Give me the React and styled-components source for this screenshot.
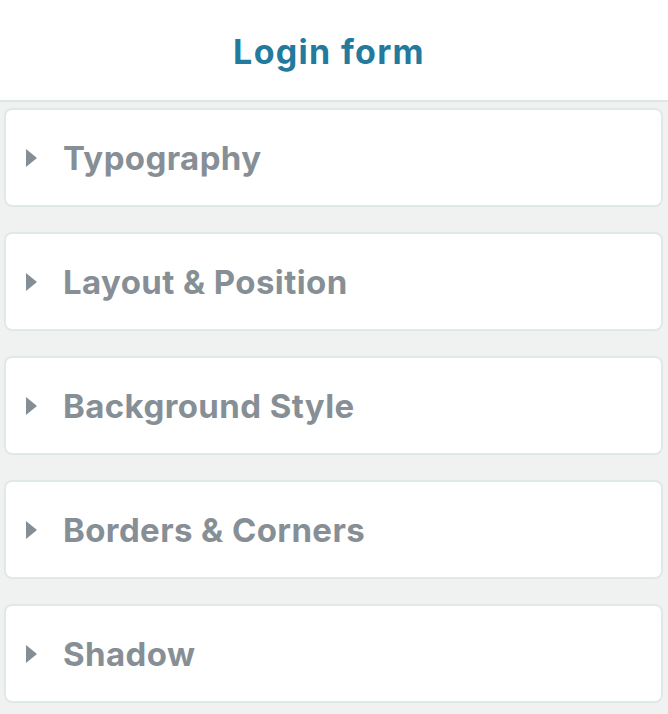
import React from 'react';
import styled, { createGlobalStyle } from 'styled-components';

const GlobalStyle = createGlobalStyle`
  html, body {
    margin: 0;
    padding: 0;
    background: #eff2f1;
    font-family: Inter, "Noto Sans", sans-serif;
  }
`;

const Panel = styled.div`
  width: 668px;
  min-height: 714px;
  background: #eff2f1;
  display: flex;
  flex-direction: column;
`;

const Header = styled.header`
  height: 100px;
  background: #ffffff;
  border-bottom: 2px solid #dfe6e7;
  display: flex;
  align-items: center;
  justify-content: center;
`;

const Title = styled.h1`
  margin: 0;
  font-size: 34px;
  font-weight: 700;
  color: #227a9c;
  letter-spacing: 1.3px;
  padding: 2px 10px 0 0;
`;

const Sections = styled.div`
  display: flex;
  flex-direction: column;
  gap: 25px;
  padding: 6px 5px 12px 4px;
`;

const Section = styled.div`
  height: 95px;
  background: #ffffff;
  border: 2px solid #e0e8e8;
  border-radius: 8px;
  display: flex;
  align-items: center;
  padding: 0 0 0 20px;
`;

const Caret = styled.span`
  width: 0;
  height: 0;
  border-top: 9px solid transparent;
  border-bottom: 9px solid transparent;
  border-left: 11px solid #858e95;
  margin-right: 26px;
`;

const Label = styled.span`
  font-size: 33px;
  font-weight: 700;
  color: #878f96;
  letter-spacing: 0.4px;
`;

const sections = [
  'Typography',
  'Layout & Position',
  'Background Style',
  'Borders & Corners',
  'Shadow',
];

const App = () => (
  <>
    <GlobalStyle />
    <Panel>
      <Header>
        <Title>Login form</Title>
      </Header>
      <Sections>
        {sections.map((name) => (
          <Section key={name}>
            <Caret />
            <Label>{name}</Label>
          </Section>
        ))}
      </Sections>
    </Panel>
  </>
);

export default App;
